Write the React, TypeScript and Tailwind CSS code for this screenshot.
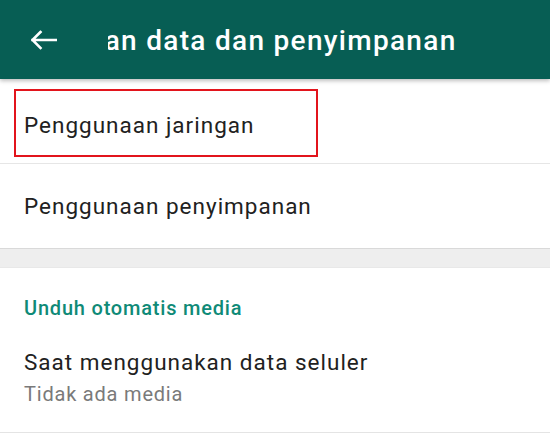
import React from "react";

export default function App() {
  return (
    <div
      className="w-[550px] h-[448px] overflow-hidden bg-white"
      style={{ fontFamily: "Roboto, 'Noto Sans', sans-serif" }}
    >
      <header className="relative z-10 h-[79px] bg-[#075e54] flex items-center shadow-[0_2px_4px_rgba(0,0,0,0.25)]">
        <div className="w-[108px] h-full flex items-center pl-[31px]">
          <svg width="26" height="20" viewBox="0 0 26 20" fill="none">
            <path
              d="M1.5 10H25M1.5 10L9.5 2M1.5 10L9.5 18"
              stroke="white"
              strokeWidth="2.6"
              strokeLinecap="square"
            />
          </svg>
        </div>
        <div className="flex-1 overflow-hidden whitespace-nowrap pt-[3px]">
          <span className="block ml-[-140px] text-[28px] leading-[34px] tracking-[1.3px] font-medium text-white">
            Penggunaan data dan penyimpanan
          </span>
        </div>
      </header>

      <div className="relative h-[85px] pt-[32px] pl-6 border-b border-[#e6e6e6]">
        <div className="text-[22.5px] leading-[28px] tracking-[1px] text-[#212121]">
          Penggunaan jaringan
        </div>
        <div className="absolute left-[14px] top-[10px] w-[304px] h-[68px] border-2 border-[#e2141c]" />
      </div>

      <div className="h-[84px] pt-[28px] pl-6">
        <div className="text-[22.5px] leading-[28px] tracking-[1px] text-[#212121]">
          Penggunaan penyimpanan
        </div>
      </div>

      <div className="h-[20px] bg-[#eeeeee] border-t border-[#d9d9d9] border-b border-b-[#e8e8e8]" />

      <div className="h-[165px] pt-[28px] pl-6 border-b border-[#e4e4e4]">
        <div className="text-[20px] leading-[24px] tracking-[0.8px] font-medium text-[#0f8a77]">
          Unduh otomatis media
        </div>
        <div className="mt-[29px] text-[22.5px] leading-[26px] tracking-[1px] text-[#212121]">
          Saat menggunakan data seluler
        </div>
        <div className="mt-[7px] text-[20px] leading-[24px] tracking-[0.8px] text-[#7a7a7a]">
          Tidak ada media
        </div>
      </div>
    </div>
  );
}
